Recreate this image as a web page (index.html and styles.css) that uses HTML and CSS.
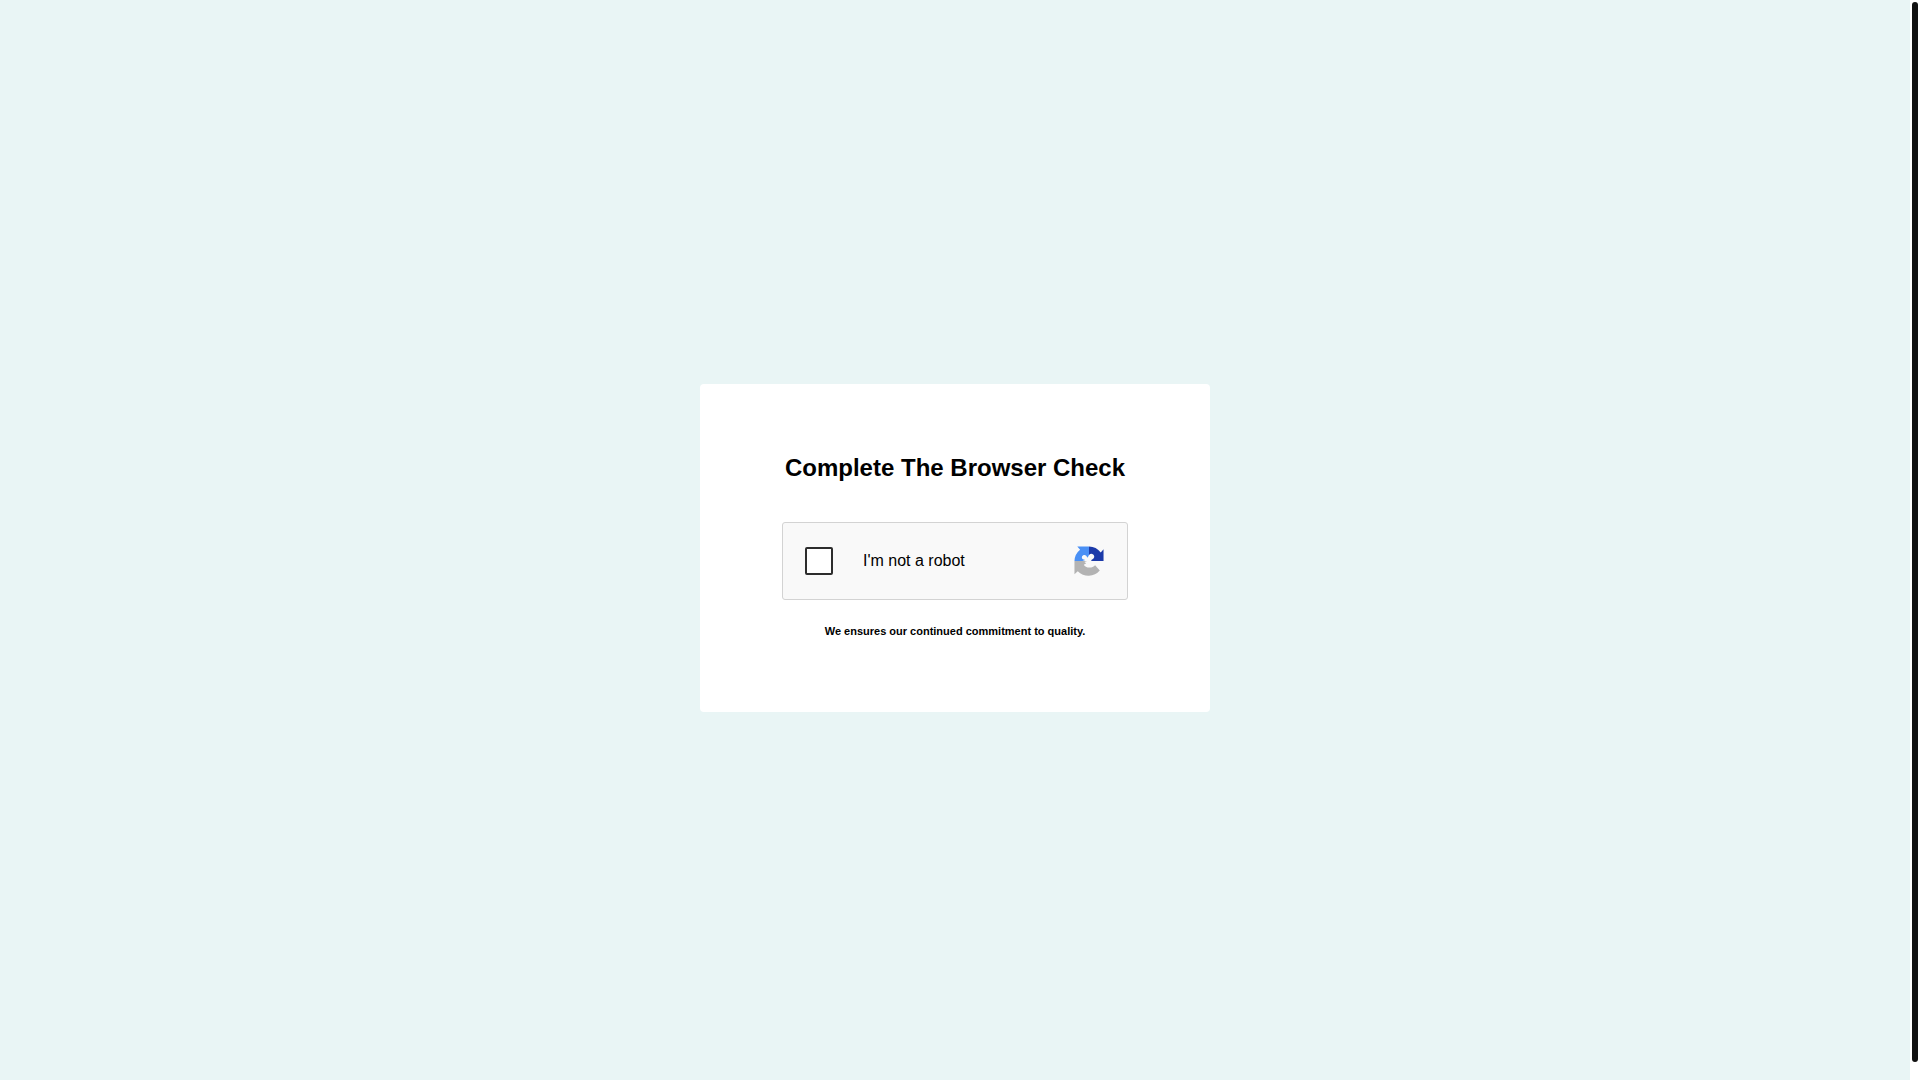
FILE: index.html
```html
<!DOCTYPE html>
<html lang="en">
<head>
    <meta charset="UTF-8">
    <meta name="viewport" content="width=device-width, initial-scale=1.0">
    <title>Browser Check</title>
    <link rel="stylesheet" href="styles.css">
</head>
<body>
    <main class="page">
        <div class="card">
            <h1>Complete The Browser Check</h1>

            <div class="captcha">
                <input type="checkbox" id="robot" class="captcha-check">
                <label for="robot">I'm not a robot</label>
                <!-- Logo -->
                <svg class="captcha-logo" viewBox="0 0 64 64" aria-hidden="true">
                    <path fill="#1c3aa9" d="M63 32V7l-6 7A32 32 0 0 0 32 1v18c3-3 6-3 9-1 3 3 3 7 0 9l-4 3v2z"/>
                    <path fill="#4a90f5" d="M32 1H7l6 7A32 32 0 0 0 1 32h17l6-2-5-2c-3-2-3-6 0-8 3-1 5-1 7 1l3 4 3-6z"/>
                    <path fill="#b3b3b3" d="M1 32v28l7-6a32 32 0 0 0 47-2L45 41c-3 3-7 5-12 5-6 0-10-2-12-6l5-3-4-3 6-2z"/>
                </svg>
            </div>

            <p class="note">We ensures our continued commitment to quality.</p>
        </div>
    </main>

    <div class="scrollbar" aria-hidden="true">
        <div class="scrollbar-thumb"></div>
    </div>
</body>
</html>
```

FILE: styles.css
```css
* {
    box-sizing: border-box;
}

body {
    display: flex;
    height: 100vh;
    margin: 0;
    overflow: hidden;
    background: #e9f5f5;
    color: #000;
    font-family: Arial, "Liberation Sans", sans-serif;
}

.page {
    flex: 1;
    display: flex;
    justify-content: center;
    align-items: center;
    min-height: calc(100vh + 16px);
    padding: 8px;
}

/* Scrollbar */
.scrollbar {
    width: 10px;
    height: 100vh;
    padding: 2px 2px 18px;
    background: #fff;
}

.scrollbar-thumb {
    height: 100%;
    background: #111;
    border-radius: 3px;
}

.card {
    width: 100%;
    max-width: 510px;
    padding: 70px 82px 74px;
    background: #fff;
    border-radius: 4px;
    text-align: center;
}

h1 {
    margin: 0 0 40px;
    font-size: 24px;
    line-height: 28px;
    white-space: nowrap;
}

/* Captcha box */
.captcha {
    display: flex;
    align-items: center;
    padding: 23px 23px 23px 22px;
    background: #f9f9f9;
    border: 1px solid #d3d3d3;
    border-radius: 3px;
}

.captcha-check {
    appearance: none;
    width: 28px;
    height: 28px;
    margin: 0 30px 0 0;
    background: #fff;
    border: 2px solid #2d2d2d;
    border-radius: 2px;
    cursor: pointer;
}

label {
    font-size: 16px;
    cursor: pointer;
}

.captcha-logo {
    width: 30px;
    height: 30px;
    margin-left: auto;
}

.note {
    margin: 24px 0 0;
    font-size: 11px;
    font-weight: bold;
    line-height: 14px;
}
```
